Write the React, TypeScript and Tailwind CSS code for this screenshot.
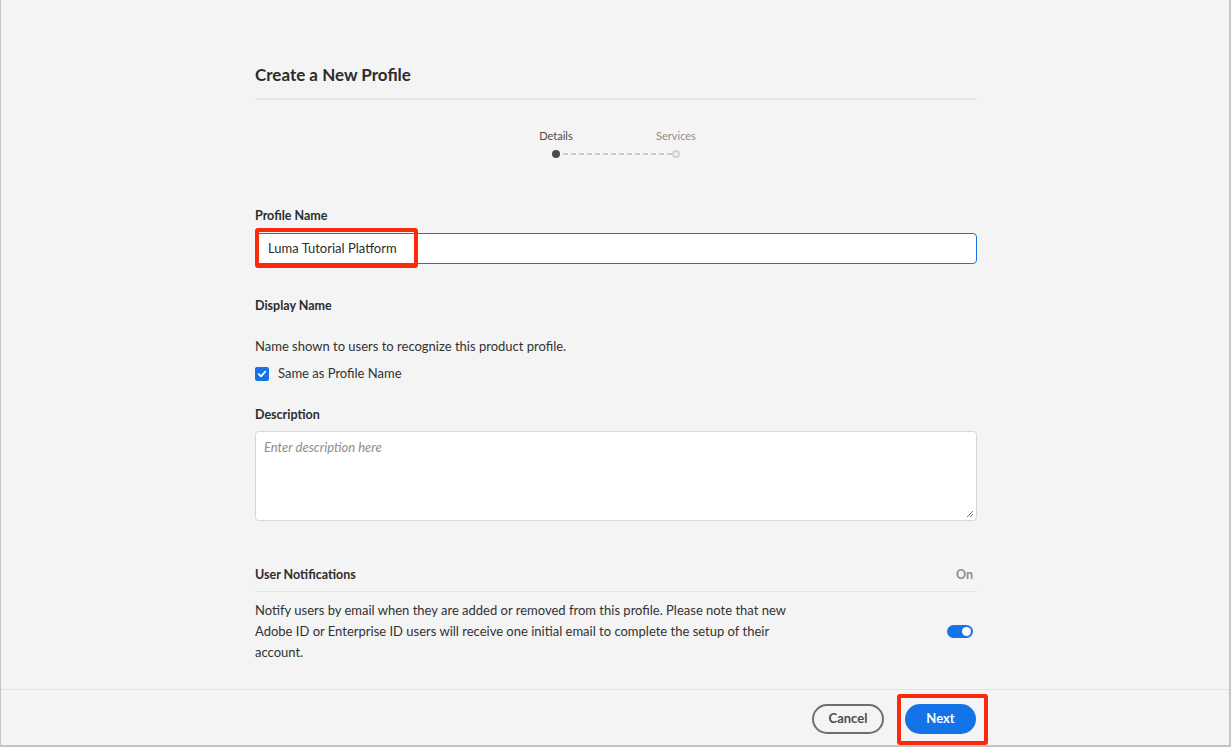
import React from "react";

export default function App() {
  return (
    <div
      className="h-[747px] w-full flex flex-col bg-[#f4f4f4] border-l border-r-2 border-b-2 border-l-[#c4c4c4] border-r-[#c4c4c4] border-b-[#c4c4c4] text-[#2c2c2c]"
      style={{ fontFamily: "Lato, 'Open Sans', sans-serif" }}
    >
      <main className="flex-1 pl-[2px]">
        <div className="w-[722px] mx-auto flex flex-col">
          <h1 className="mt-[63px] text-[17px] leading-6 font-bold text-[#2c2c2c]">Create a New Profile</h1>
          <div className="mt-[11px] h-[2px] bg-[#e6e6e6]" />

          {/* Stepper */}
          <div className="mt-[28px] flex justify-center">
            <div className="grid grid-cols-2 w-[240px] text-[11px] leading-4">
              <div className="text-center text-[#4b4b4b]">Details</div>
              <div className="text-center text-[#8e8e8e]">Services</div>
            </div>
          </div>
          <div className="mt-[6px] flex justify-center">
            <div className="flex items-center w-[128px] h-[8px]">
              <div className="w-[8px] h-[8px] rounded-full bg-[#4b4b4b] shrink-0" />
              <svg className="flex-1 h-[2px]" preserveAspectRatio="none">
                <line x1="3" y1="1" x2="200" y2="1" stroke="#cacaca" strokeWidth="2" strokeDasharray="5 3" />
              </svg>
              <div className="w-[8px] h-[8px] rounded-full border-2 border-[#d3d3d3] shrink-0" />
            </div>
          </div>

          {/* Profile Name */}
          <label className="mt-[49px] text-[12.5px] leading-[18px] font-bold">Profile Name</label>
          <div className="relative mt-[8px]">
            <div className="h-[31px] rounded-[4px] border border-[#1473e6] bg-white flex items-center pl-[12px] text-[13px]">
              Luma Tutorial Platform
            </div>
            <div className="absolute left-0 top-[-5px] w-[163px] h-[40px] rounded-[3px] border-4 border-[#fa2a0f]" />
          </div>

          {/* Display Name */}
          <div className="mt-[33px] text-[12.5px] leading-[18px] font-bold">Display Name</div>
          <div className="mt-[22px] text-[13px] leading-[18px] text-[#323232]">
            Name shown to users to recognize this product profile.
          </div>
          <div className="mt-[10px] flex items-center h-[18px] gap-[9px]">
            <div className="w-[14px] h-[14px] rounded-[2px] bg-[#1473e6] flex items-center justify-center">
              <svg width="10" height="10" viewBox="0 0 10 10">
                <path d="M1.8 5.2 L4 7.4 L8.3 2.6" fill="none" stroke="white" strokeWidth="1.8" strokeLinecap="round" strokeLinejoin="round" />
              </svg>
            </div>
            <span className="text-[13px] text-[#323232]">Same as Profile Name</span>
          </div>

          {/* Description */}
          <div className="mt-[23px] text-[12.5px] leading-[18px] font-bold">Description</div>
          <div className="relative mt-[7px] h-[90px] rounded-[4px] border border-[#d8d8d8] bg-white">
            <div className="pl-[8px] pt-[6px] text-[13px] italic text-[#8e8e8e]">Enter description here</div>
            <svg className="absolute right-[2px] bottom-[2px]" width="8" height="8" viewBox="0 0 8 8">
              <path d="M7 1 L1 7 M7 4 L4 7" stroke="#7a7a7a" strokeWidth="1" />
            </svg>
          </div>

          {/* User Notifications */}
          <div className="mt-[45px] flex items-center justify-between h-[18px]">
            <span className="text-[12.5px] font-bold">User Notifications</span>
            <span className="text-[12.5px] font-bold text-[#8e8e8e] pr-[4px]">On</span>
          </div>
          <div className="mt-[7px] h-px bg-[#e4e4e4]" />
          <div className="mt-[8px] flex items-center justify-between">
            <p className="w-[560px] text-[13px] leading-[21px] text-[#323232]">
              Notify users by email when they are added or removed from this profile. Please note that new Adobe ID or Enterprise ID users will receive one initial email to complete the setup of their account.
            </p>
            <div className="mr-[4px] w-[26px] h-[13px] rounded-full bg-[#1473e6] flex items-center justify-end pr-[2px]">
              <div className="w-[9px] h-[9px] rounded-full bg-white" />
            </div>
          </div>
        </div>
      </main>

      <footer className="h-[56px] border-t border-[#e2e2e2] pl-[2px] pt-[2px]">
        <div className="w-[722px] mx-auto h-full flex items-center justify-end gap-[21px] pr-px">
          <button className="w-[72px] h-[30px] rounded-full border-2 border-[#6e6e6e] text-[13px] font-bold text-[#4b4b4b]">
            Cancel
          </button>
          <div className="relative">
            <button className="w-[71px] h-[30px] rounded-full bg-[#1473e6] text-[13px] font-bold text-white">
              Next
            </button>
            <div className="absolute left-[-8px] top-[-10px] w-[91px] h-[51px] rounded-[3px] border-4 border-[#fa2a0f]" />
          </div>
        </div>
      </footer>
    </div>
  );
}
